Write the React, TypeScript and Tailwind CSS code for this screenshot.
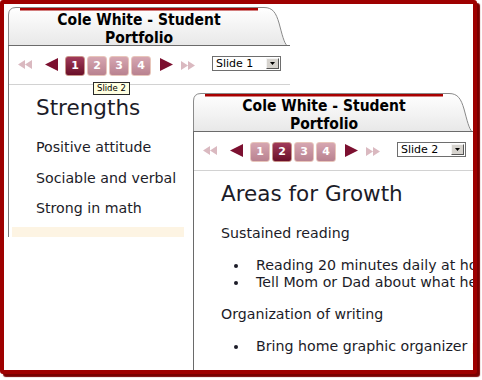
import React from 'react';

const tabPath =
  'M0.5,38.5 V8 Q0.5,0.5 8,0.5 H256 C265,0.5 268,6 271,16 C274,27 276,36 279,38.5';

const TabHeader = () => (
  <div className="relative h-[39px] w-[282px]">
    <svg className="absolute inset-0" width="282" height="39" viewBox="0 0 282 39">
      <defs>
        <linearGradient id="tabg" x1="0" y1="0" x2="0" y2="1">
          <stop offset="0" stopColor="#ffffff" />
          <stop offset="1" stopColor="#e8e8e8" />
        </linearGradient>
      </defs>
      <path d={tabPath + ' Z'} fill="url(#tabg)" />
      <path d={tabPath} fill="none" stroke="#8a8a8a" />
      <rect x="12" y="1" width="238" height="2.5" fill="#a80000" />
      <path d="M0,38.5 H282" stroke="#6b6b6b" strokeWidth="1.2" />
    </svg>
    <div className="relative w-[262px] pt-[3.5px] text-center font-['DejaVu_Sans_Condensed','DejaVu_Sans',sans-serif] text-[15.5px] leading-[18px] font-bold text-black">
      Cole White - Student
      <br />
      Portfolio
    </div>
  </div>
);

const DoubleArrow = ({ dir, className }: { dir: 'left' | 'right'; className: string }) => (
  <svg className={className} width="14" height="9" viewBox="0 0 14 9">
    {dir === 'left' ? (
      <path d="M7,0 L0,4.5 L7,9 Z M14,0 L7,4.5 L14,9 Z" fill="#dab9c0" />
    ) : (
      <path d="M0,0 L7,4.5 L0,9 Z M7,0 L14,4.5 L7,9 Z" fill="#dab9c0" />
    )}
  </svg>
);

const Arrow = ({ dir, className }: { dir: 'left' | 'right'; className: string }) => (
  <svg className={className} width="13" height="13" viewBox="0 0 13 13">
    {dir === 'left' ? (
      <path d="M13,0 L0,6.5 L13,13 Z" fill="#7c1030" />
    ) : (
      <path d="M0,0 L13,6.5 L0,13 Z" fill="#7c1030" />
    )}
  </svg>
);

const PageButton = ({ n, active }: { n: number; active: boolean }) => (
  <div
    className={
      active
        ? 'flex h-[20px] w-[20px] items-center justify-center rounded-[3px] border border-[#c9958a] bg-linear-to-b from-[#a13a5a] to-[#6a0e29] text-[11px] font-bold text-white'
        : 'flex h-[20px] w-[20px] items-center justify-center rounded-[3px] border border-[#e8c6bb] bg-linear-to-b from-[#d6a6b1] to-[#b98290] text-[11px] font-bold text-white'
    }
  >
    {n}
  </div>
);

const SlideSelect = ({ label }: { label: string }) => (
  <div className="ml-[17px] mt-[10px] flex h-[15px] w-[69px] items-center border border-[#6e6e6e] bg-white">
    <span className="flex-1 pl-[3px] text-[11px] leading-[13px] text-black">{label}</span>
    <div className="mr-[1px] flex h-[11px] w-[13px] items-center justify-center border border-[#f4f4f4] border-r-[#555] border-b-[#555] bg-[#d6d3ce]">
      <svg width="5" height="3" viewBox="0 0 5 3">
        <path d="M0,0 H5 L2.5,3 Z" fill="#000" />
      </svg>
    </div>
  </div>
);

const NavRow = ({ active, label }: { active: number; label: string }) => (
  <div className="flex h-[39px] items-start border-b border-[#d2d2d2]">
    <DoubleArrow dir="left" className="ml-[9px] mt-[14px]" />
    <Arrow dir="left" className="ml-[13px] mt-[12px]" />
    <div className="ml-[7px] mt-[10px] flex gap-[2px]">
      {[1, 2, 3, 4].map((n) => (
        <PageButton key={n} n={n} active={n === active} />
      ))}
    </div>
    <Arrow dir="right" className="ml-[9px] mt-[12px]" />
    <DoubleArrow dir="right" className="ml-[8px] mt-[15px]" />
    <SlideSelect label={label} />
  </div>
);

const Bullet = ({ text }: { text: string }) => (
  <li className="flex items-center">
    <span className="ml-[13px] mt-[2px] h-[4px] w-[4px] shrink-0 rounded-full bg-[#1c1c28]" />
    <span className="ml-[18px] shrink-0">{text}</span>
  </li>
);

const App = () => {
  return (
    <div className="h-[380px] w-[482px] bg-white font-['DejaVu_Sans',Verdana,sans-serif]">
      <div className="relative h-[374px] w-[477px] overflow-hidden rounded-[3px] border-4 border-[#9e0000] bg-white shadow-[3px_3px_1px_#7a0000]">
        {/* back window */}
        <div className="absolute left-[4px] top-[3px] w-[282px]">
          <TabHeader />
          <div className="border-l border-[#7a7a7a]">
            <NavRow active={1} label="Slide 1" />
            <div className="pl-[27px] pt-[10px] text-[#1c1c28]">
              <div className="text-[21.5px] leading-[26px]">Strengths</div>
              <div className="mt-[16px] flex flex-col gap-[10.5px] text-[14.2px] leading-[20px]">
                <div>Positive attitude</div>
                <div>Sociable and verbal</div>
                <div>Strong in math</div>
              </div>
            </div>
            <div className="ml-[3px] mt-[9px] h-[10px] w-[172px] bg-[#fdf4e3]" />
          </div>
          <div className="absolute left-[85px] top-[75px] border border-[#2a2a2a] bg-[#ffffe1] px-[3px] text-[8.5px] leading-[11px] text-black">
            Slide 2
          </div>
        </div>

        {/* front window */}
        <div className="absolute left-[189px] top-[89px] w-[282px] whitespace-nowrap">
          <TabHeader />
          <div className="h-[300px] border-l border-[#6a6a6a] bg-white">
            <NavRow active={2} label="Slide 2" />
            <div className="pl-[27px] pt-[10px] text-[#1c1c28]">
              <div className="text-[21.5px] leading-[26px]">Areas for Growth</div>
              <div className="mt-[16px] text-[14.2px] leading-[20px]">Sustained reading</div>
              <ul className="mt-[13.5px] text-[14.2px] leading-[17px]">
                <Bullet text="Reading 20 minutes daily at home" />
                <Bullet text="Tell Mom or Dad about what he read" />
              </ul>
              <div className="mt-[13.5px] text-[14.2px] leading-[20px]">Organization of writing</div>
              <ul className="mt-[13.5px] text-[14.2px] leading-[17px]">
                <Bullet text="Bring home graphic organizer pages" />
              </ul>
            </div>
          </div>
        </div>
      </div>
    </div>
  );
};

export default App;
